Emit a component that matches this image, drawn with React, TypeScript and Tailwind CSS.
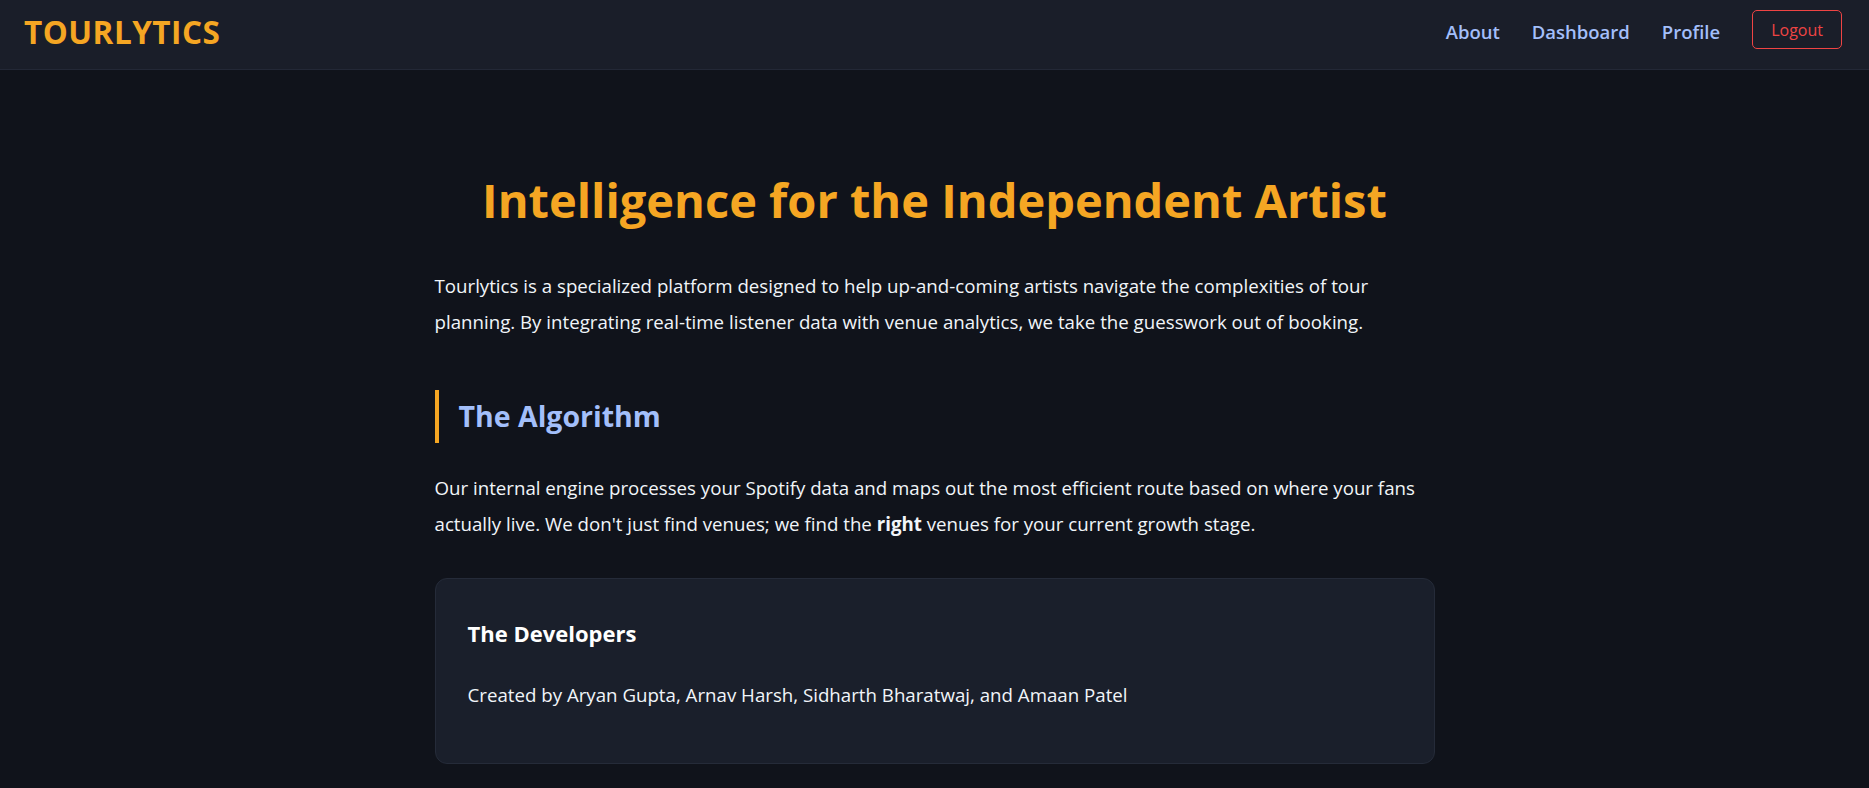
import React from "react";

const font = { fontFamily: '"Open Sans", "Noto Sans", sans-serif' };

export default function App() {
  return (
    <div className="min-h-screen bg-[#10131b] text-[#f1f5f9]" style={font}>
      <nav className="flex items-center justify-between pl-6 pr-[27px] pt-[10px] pb-[20px] bg-[#1a1e29] border-b border-[#232836]">
        <div className="text-[31.5px] leading-[39px] font-bold tracking-[0.5px] text-[#f5a623] translate-y-[2px]">TOURLYTICS</div>
        <div className="flex items-center gap-8">
          <a className="text-[18.5px] font-semibold text-[#a3bffa] translate-y-[2px]">About</a>
          <a className="text-[18.5px] font-semibold text-[#a3bffa] translate-y-[2px]">Dashboard</a>
          <a className="text-[18.5px] font-semibold text-[#a3bffa] translate-y-[2px]">Profile</a>
          <button className="h-[39px] px-[18px] flex items-center rounded-[5px] border border-[#ef4444] text-[16px] text-[#ef4444]">
            Logout
          </button>
        </div>
      </nav>

      <main className="max-w-[1000px] mx-auto pt-[100px]">
        <h1 className="text-center text-[47px] leading-[60px] font-bold text-[#f5a623]">
          Intelligence for the Independent Artist
        </h1>
        <p className="mt-[38px] text-[18.7px] leading-[36px]">
          Tourlytics is a specialized platform designed to help up-and-coming artists navigate the complexities of tour
          planning. By integrating real-time listener data with venue analytics, we take the guesswork out of booking.
        </p>

        <h2 className="mt-[50px] h-[53px] flex items-center border-l-4 border-[#f5a623] pl-[20px] text-[28.5px] font-bold text-[#a3bffa]">
          The Algorithm
        </h2>
        <p className="mt-[27px] text-[18.7px] leading-[36px]">
          Our internal engine processes your Spotify data and maps out the most efficient route based on where your fans
          actually live. We don't just find venues; we find the <strong className="font-bold">right</strong> venues for
          your current growth stage.
        </p>

        <div className="mt-[36px] rounded-xl border border-[#252b39] bg-[#1a1f2b] px-8 pt-[40px] pb-[54px]">
          <h3 className="text-[22px] leading-[28px] font-bold text-white">The Developers</h3>
          <p className="mt-[34px] text-[18.7px] leading-[28px]">
            Created by Aryan Gupta, Arnav Harsh, Sidharth Bharatwaj, and Amaan Patel
          </p>
        </div>
      </main>
    </div>
  );
}
